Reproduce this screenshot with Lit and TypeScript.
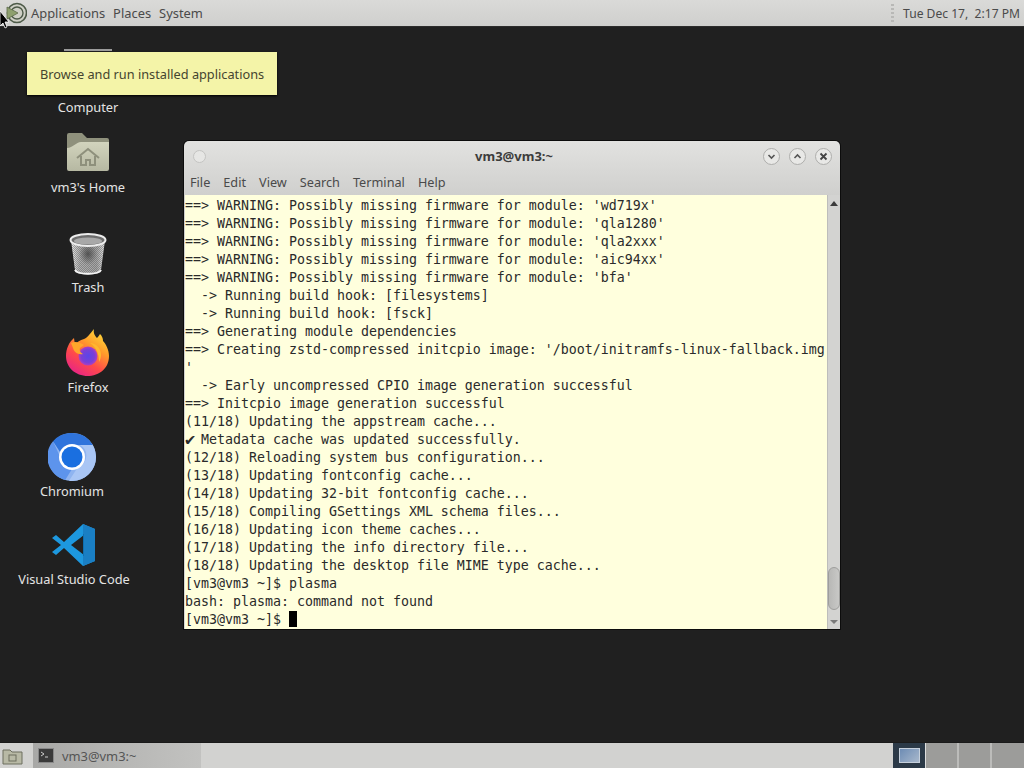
import { LitElement, html, css, svg } from "lit";
import { customElement } from "lit/decorators.js";

const LINES = [
  "==> WARNING: Possibly missing firmware for module: 'wd719x'",
  "==> WARNING: Possibly missing firmware for module: 'qla1280'",
  "==> WARNING: Possibly missing firmware for module: 'qla2xxx'",
  "==> WARNING: Possibly missing firmware for module: 'aic94xx'",
  "==> WARNING: Possibly missing firmware for module: 'bfa'",
  "  -> Running build hook: [filesystems]",
  "  -> Running build hook: [fsck]",
  "==> Generating module dependencies",
  "==> Creating zstd-compressed initcpio image: '/boot/initramfs-linux-fallback.img",
  "'",
  "  -> Early uncompressed CPIO image generation successful",
  "==> Initcpio image generation successful",
  "(11/18) Updating the appstream cache...",
];
const LINES2 = [
  "(12/18) Reloading system bus configuration...",
  "(13/18) Updating fontconfig cache...",
  "(14/18) Updating 32-bit fontconfig cache...",
  "(15/18) Compiling GSettings XML schema files...",
  "(16/18) Updating icon theme caches...",
  "(17/18) Updating the info directory file...",
  "(18/18) Updating the desktop file MIME type cache...",
  "[vm3@vm3 ~]$ plasma",
  "bash: plasma: command not found",
];

const folderIcon = svg`<svg width="44" height="40" viewBox="0 0 44 40">
  <defs><linearGradient id="fg" x1="0" y1="0" x2="0" y2="1"><stop offset="0" stop-color="#d2d4bd"/><stop offset="1" stop-color="#b6b8a2"/></linearGradient></defs>
  <path d="M1 3a2 2 0 0 1 2-2h13l5 5h20a2 2 0 0 1 2 2v28H1z" fill="#8f917c"/>
  <path d="M1 16c6 0 9-6 14-6h28v27a2 2 0 0 1-2 2H3a2 2 0 0 1-2-2z" fill="url(#fg)"/>
  <path d="M11 26l11-9 11 9M15 24v9h5v-5h4v5h5v-9" fill="none" stroke="#8e907c" stroke-width="2"/>
</svg>`;

const trashIcon = svg`<svg width="38" height="44" viewBox="0 0 38 44">
  <defs>
    <linearGradient id="tg" x1="0" y1="0" x2="1" y2="0"><stop offset="0" stop-color="#ececec"/><stop offset=".25" stop-color="#b0b0b0"/><stop offset=".75" stop-color="#a4a4a4"/><stop offset="1" stop-color="#e4e4e4"/></linearGradient>
    <pattern id="mesh" width="2" height="2" patternUnits="userSpaceOnUse"><rect width="1" height="1" fill="#555" opacity=".45"/><rect x="1" y="1" width="1" height="1" fill="#555" opacity=".45"/></pattern>
    <radialGradient id="tc" cx=".5" cy=".45" r=".5"><stop offset="0" stop-color="#444" stop-opacity=".85"/><stop offset="1" stop-color="#444" stop-opacity="0"/></radialGradient>
  </defs>
  <path d="M2 8l4 30c1 6 25 6 26 0l4-30z" fill="url(#tg)"/>
  <path d="M2 8l4 30c1 6 25 6 26 0l4-30z" fill="url(#mesh)"/>
  <ellipse cx="19" cy="23" rx="9" ry="11" fill="url(#tc)"/>
  <path d="M6 38c2 5 24 5 26 0" fill="none" stroke="#f4f4f4" stroke-width="2"/>
  <ellipse cx="19" cy="8" rx="17.5" ry="6" fill="#6d6d6d" stroke="#ececec" stroke-width="2"/>
  <ellipse cx="19" cy="9" rx="14" ry="3.6" fill="#a8a8a8"/>
</svg>`;

const firefoxIcon = svg`<svg width="46" height="48" viewBox="0 0 46 48">
  <defs>
    <linearGradient id="ff1" x1=".8" y1="0" x2=".2" y2="1"><stop offset="0" stop-color="#ffdf3a"/><stop offset=".35" stop-color="#ff9a2b"/><stop offset=".65" stop-color="#ff4a4a"/><stop offset="1" stop-color="#e5208c"/></linearGradient>
    <radialGradient id="ff2" cx=".5" cy=".5" r=".5"><stop offset="0" stop-color="#5b45e8"/><stop offset=".7" stop-color="#7b3fd6"/><stop offset="1" stop-color="#b03fc0"/></radialGradient>
  </defs>
  <path d="M23 47C10 47 1 38 1 27 1 20 4 13 9 9l1 7c2-3 5-5 9-6 3-1 6-5 10-10-1 4 1 7 3 9 2-2 3-4 3-4 2 2 3 4 3 7 3 3 6 9 6 15 0 12-9 20-22 20z" fill="url(#ff1)"/>
  <circle cx="23" cy="27" r="9.5" fill="url(#ff2)"/>
  <path d="M6 14c4-2 9-1 13 2l-4 3c-1 3 1 5 3 6-5 1-9-2-10-6z" fill="#ffa62b"/>
  <path d="M25 14c6 0 11 5 11 12 0 3-1 5-2 7 0-9-3-15-9-19z" fill="#ffb92e"/>
</svg>`;

const chromiumIcon = svg`<svg width="48" height="48" viewBox="0 0 48 48">
  <circle cx="24" cy="24" r="24" fill="#8fb4f0"/>
  <path d="M24 0a24 24 0 0 1 20.8 12H24a12 12 0 0 0-11.3 8L5 8.3A24 24 0 0 1 24 0z" fill="#2f74dc"/>
  <path d="M5 8.3l9.5 20.6A12 12 0 0 0 24 36l-6.8 11A24 24 0 0 1 5 8.3z" fill="#5d94ec"/>
  <path d="M44.8 12A24 24 0 0 1 21 47.8L30 34a12 12 0 0 0 2-22z" fill="#a9c6f5"/>
  <circle cx="24" cy="24" r="13" fill="#fff"/>
  <circle cx="24" cy="24" r="10.5" fill="#1a6fe0"/>
</svg>`;

const vscodeIcon = svg`<svg width="44" height="44" viewBox="0 0 44 44">
  <path d="M31 1l12 5v32l-12 5L12 25l-8 7-4-3 9-7-9-7 4-3 8 7z" fill="#1d98df"/>
  <path d="M31 1l12 5v32l-12 5z" fill="#1a7fc4"/>
  <path d="M32 12L19 22l13 10z" fill="#222"/>
  <path d="M31 11v22l1 0V11z" fill="#0e6fb0"/>
</svg>`;

const gnomeFoot = svg`<svg width="22" height="22" viewBox="0 0 22 22">
  <circle cx="12" cy="11" r="9.5" fill="#cfd0c6" stroke="#4d5a48" stroke-width="1.6"/>
  <circle cx="12" cy="11" r="6" fill="none" stroke="#4d5a48" stroke-width="1.4"/>
  <path d="M2 5l11 6-11 6z" fill="#8ea06e" stroke="#5d6b4a" stroke-width=".8"/>
</svg>`;

@customElement("app-root")
export class AppRoot extends LitElement {
  static styles = css`
    :host {
      display: flex;
      flex-direction: column;
      width: 1024px;
      height: 768px;
      overflow: hidden;
      position: relative;
      background: #202020;
      font-family: "Noto Sans", sans-serif;
    }
    .top {
      height: 26px;
      flex: none;
      display: flex;
      align-items: center;
      background: linear-gradient(#dadad8, #cfcfcd);
      border-bottom: 1px solid #2c2c2c;
      color: #4a4a4a;
      font-size: 12.9px;
      padding: 0 4px 0 5px;
    }
    .foot { display: flex; margin-right: 4px; }
    .menu-item { margin-right: 8px; }
    .top .spacer { flex: 1; }
    .sep-dots {
      width: 3px; height: 18px; margin-right: 9px;
      background: repeating-linear-gradient(#b8b8b6 0 2px, transparent 2px 4px);
    }
    .clock { font-size: 12.1px; white-space: pre; }
    .desk { flex: 1; position: relative; }
    .icon {
      position: absolute;
      display: flex;
      flex-direction: column;
      align-items: center;
      width: 120px;
      color: #e4e4e4;
      font-size: 12.8px;
      line-height: 18px;
    }
    .icon .pic { display: flex; align-items: flex-end; justify-content: center; }
    .computer-pic {
      position: absolute; left: 64px; top: 22px; width: 48px; height: 2px; background: #9c9c9c;
    }
    .tip {
      position: absolute;
      left: 27px; top: 25px;
      width: 250px; height: 43px;
      box-sizing: border-box;
      display: flex; align-items: center;
      padding: 1px 0 0 13px;
      background: #f4f4a8;
      color: #45452f;
      font-size: 12.75px;
      box-shadow: 0 1px 2px #000;
    }
    .win {
      position: absolute;
      left: 184px; top: 114px;
      width: 656px; height: 488px;
      display: flex; flex-direction: column;
      background: linear-gradient(#e2e2e0 0, #cfcfcd 55px, #d8d8d6 100%);
      border-radius: 5px 5px 0 0;
      box-shadow: 0 0 0 1px #0c0c0c;
    }
    .title {
      height: 30px; flex: none;
      display: flex; align-items: center; justify-content: space-between;
      padding: 0 8px 0 9px;
      position: relative;
    }
    .title .name {
      position: absolute; left: 4px; right: 0; text-align: center;
      font-size: 13px; font-weight: 700; color: #3c3c3c; top: 6px;
    }
    .dot { width: 11px; height: 11px; border-radius: 50%; background: #e6e6e4; border: 1px solid #c4c4c2; }
    .btns { display: flex; gap: 9px; z-index: 1; }
    .btn {
      width: 17px; height: 17px; border-radius: 50%; box-sizing: border-box;
      background: #e8e8e6; border: 1px solid #aeaeac;
      display: flex; align-items: center; justify-content: center;
    }
    .menubar {
      height: 24px; flex: none;
      display: flex; align-items: center; gap: 13px;
      padding: 0 6px 2px;
      box-sizing: border-box;
      font-size: 12.7px; color: #4a4a4a;
    }
    .body { flex: 1; display: flex; min-height: 0; }
    .term {
      flex: 1;
      margin-left: 1px;
      background: #ffffdd;
      color: #2a2a2a;
      font-family: "DejaVu Sans Mono", monospace;
      font-size: 13.29px;
      line-height: 18px;
      white-space: pre;
      overflow: hidden;
      padding-top: 2px;
    }
    .check { display: inline-block; width: 16px; font-size: 17px; line-height: 0; vertical-align: -1px; }
    .cursor { display: inline-block; width: 8px; height: 16px; background: #000; vertical-align: -3px; }
    .scroll {
      width: 13px; flex: none; position: relative; background: #d3d3d1;
      border-left: 1px solid #bdbdbb; box-sizing: border-box;
    }
    .scroll .up, .scroll .down {
      position: absolute; left: 2px; width: 0; height: 0;
      border-left: 4px solid transparent; border-right: 4px solid transparent;
    }
    .scroll .up { top: 6px; border-bottom: 5px solid #3c3c3c; }
    .scroll .down { bottom: 5px; border-top: 4px solid #7a7a7a; }
    .thumb {
      position: absolute; left: 0; top: 372px; width: 12px; height: 43px;
      box-sizing: border-box; border-radius: 6px;
      background: linear-gradient(90deg, #b8b8b6, #c8c8c6); border: 1px solid #9e9e9c;
    }
    .bottom {
      height: 25px; flex: none;
      display: flex; align-items: stretch;
      background: #d2d2d0;
      border-top: 1px solid #1a1a1a;
      color: #555;
      font-size: 12.9px;
    }
    .show { width: 33px; display: flex; align-items: center; padding-left: 2px; box-sizing: border-box; }
    .task {
      width: 168px; display: flex; align-items: center; gap: 8px; padding-left: 5px; box-sizing: border-box;
      background: linear-gradient(90deg, #a8a8a6, #b6b6b4 50%, #c2c2c0);
    }
    .bottom .spacer { flex: 1; }
    .ws { display: flex; }
    .ws div { width: 33px; box-sizing: border-box; background: #9c9c9a; border-right: 2px solid #bcbcba; }
    .ws .active {
      width: 33px; background: #2b3947; border-right: 1px solid #ddd;
      display: flex; align-items: center; justify-content: center;
    }
    .ws .active i {
      display: block; width: 21px; height: 15px; box-sizing: border-box;
      background: linear-gradient(135deg, #6d8cb4, #a8b8cc); border: 1px solid #c6d0dc;
    }
    .ws div:last-child { border-right: none; width: 32px; }
    .pointer { position: absolute; left: -1px; top: 10px; }
  `;

  private desk(left: number, top: number, gap: number, pic: unknown, label: string) {
    return html`<div class="icon" style="left:${left}px;top:${top}px">
      <div class="pic" style="margin-bottom:${gap}px">${pic}</div><span>${label}</span>
    </div>`;
  }

  render() {
    return html`
      <div class="top">
        <span class="foot">${gnomeFoot}</span>
        <span class="menu-item">Applications</span>
        <span class="menu-item">Places</span>
        <span class="menu-item">System</span>
        <span class="spacer"></span>
        <span class="sep-dots"></span>
        <span class="clock">Tue Dec 17,  2:17 PM</span>
      </div>
      <div class="desk">
        <div class="computer-pic"></div>
        <div class="icon" style="left:28px;top:71px"><span>Computer</span></div>
        ${this.desk(28, 105, 6, folderIcon, "vm3's Home")}
        ${this.desk(28, 205, 2, trashIcon, "Trash")}
        ${this.desk(28, 302, 1, firefoxIcon, "Firefox")}
        ${this.desk(12, 406, 1, chromiumIcon, "Chromium")}
        ${this.desk(14, 496, 3, vscodeIcon, "Visual Studio Code")}
        <div class="tip">Browse and run installed applications</div>
        <div class="win">
          <div class="title">
            <span class="dot"></span>
            <span class="name">vm3@vm3:~</span>
            <span class="btns">
              <span class="btn"><svg width="9" height="9" viewBox="0 0 9 9"><path d="M1.5 3l3 3 3-3" fill="none" stroke="#555" stroke-width="1.6"/></svg></span>
              <span class="btn"><svg width="9" height="9" viewBox="0 0 9 9"><path d="M1.5 6l3-3 3 3" fill="none" stroke="#555" stroke-width="1.6"/></svg></span>
              <span class="btn"><svg width="9" height="9" viewBox="0 0 9 9"><path d="M1.5 1.5l6 6M7.5 1.5l-6 6" fill="none" stroke="#444" stroke-width="1.8"/></svg></span>
            </span>
          </div>
          <div class="menubar">
            <span>File</span><span>Edit</span><span>View</span><span>Search</span><span>Terminal</span><span>Help</span>
          </div>
          <div class="body">
            <div class="term">${LINES.join("\n")}
<span class="check">✔</span>Metadata cache was updated successfully.
${LINES2.join("\n")}
[vm3@vm3 ~]$ <span class="cursor"></span></div>
            <div class="scroll">
              <span class="up"></span>
              <div class="thumb"></div>
              <span class="down"></span>
            </div>
          </div>
        </div>
      </div>
      <div class="bottom">
        <div class="show">
          <svg width="22" height="18" viewBox="0 0 22 18"><path d="M1 3h7l2 2h10v12H1z" fill="#b8b9a5" stroke="#6d6e5e"/><rect x="7" y="8" width="7" height="6" fill="none" stroke="#6d6e5e"/></svg>
        </div>
        <div class="task">
          <svg width="16" height="15" viewBox="0 0 16 15"><rect x=".5" y=".5" width="15" height="14" fill="#3a3a3a" stroke="#888"/><path d="M3 4l3 2-3 2M7 9h3" fill="none" stroke="#ccc"/></svg>
          <span>vm3@vm3:~</span>
        </div>
        <span class="spacer"></span>
        <div class="ws"><div class="active"><i></i></div><div></div><div></div><div></div></div>
      </div>
      <svg class="pointer" width="10" height="20" viewBox="0 0 10 20"><path d="M1 1v15l3-3 2 5 2-1-2-5h4z" fill="#000" stroke="#fff" stroke-width=".8"/></svg>
    `;
  }
}
